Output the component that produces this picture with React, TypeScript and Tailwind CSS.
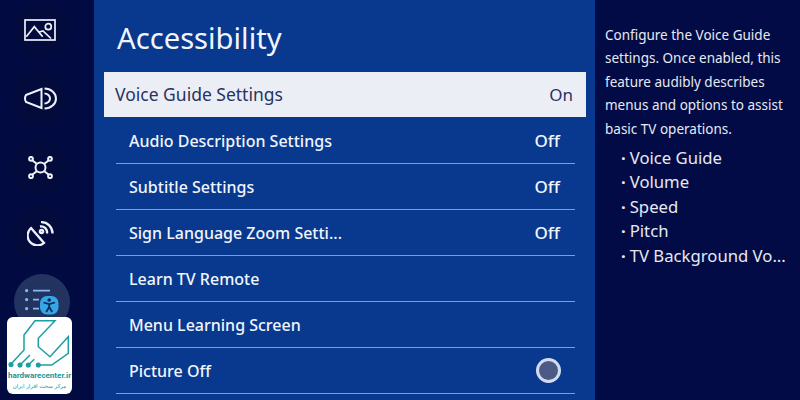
const rows: { label: string; value?: string; radio?: boolean }[] = [
  { label: "Audio Description Settings", value: "Off" },
  { label: "Subtitle Settings", value: "Off" },
  { label: "Sign Language Zoom Setti...", value: "Off" },
  { label: "Learn TV Remote" },
  { label: "Menu Learning Screen" },
  { label: "Picture Off", radio: true },
];

const helpLines = [
  "Configure the Voice Guide",
  "settings. Once enabled, this",
  "feature audibly describes",
  "menus and options to assist",
  "basic TV operations.",
];

const bullets = ["Voice Guide", "Volume", "Speed", "Pitch", "TV Background Vo..."];

function PictureIcon() {
  return (
    <svg width="32" height="22" viewBox="0 0 32 22" fill="none" stroke="#eef1f8" strokeWidth="1.7">
      <rect x="1" y="1" width="30" height="20" />
      <path d="M2.3 17.7 L10.3 7.7 L18.7 17.7 M15 13 L19 12 L27 19.5" />
      <circle cx="24.3" cy="7.7" r="3" />
    </svg>
  );
}

function SoundIcon() {
  return (
    <svg width="33" height="23" viewBox="0 0 33 23" fill="none" stroke="#eef1f8" strokeWidth="2">
      <path d="M2 8 L17.5 2 V21 L2 15 Q0 11.5 2 8 Z" />
      <path d="M20.5 6.5 A5.5 5 0 0 1 20.5 16.5" />
      <path d="M20.5 1.5 A11.5 10 0 0 1 20.5 21.5" />
    </svg>
  );
}

function NetworkIcon() {
  return (
    <svg width="25" height="23" viewBox="0 0 25 23" fill="none" stroke="#eef1f8" strokeWidth="2">
      <circle cx="12.5" cy="11.5" r="5" />
      <circle cx="3" cy="2.8" r="1.9" />
      <circle cx="22" cy="2.8" r="1.9" />
      <circle cx="3" cy="20.2" r="1.9" />
      <circle cx="22" cy="20.2" r="1.9" />
      <path d="M4.5 4.5 L9 8 M20.5 4.5 L16 8 M4.5 18.5 L9 15 M20.5 18.5 L16 15" />
    </svg>
  );
}

function SatelliteIcon() {
  return (
    <svg width="27" height="25" viewBox="0 0 27 25" fill="none" stroke="#eef1f8" strokeWidth="2.3">
      <path d="M4 7 L17 22 A9.6 9.6 0 0 1 4 7 Z" />
      <circle cx="14.5" cy="10.5" r="1.6" />
      <path d="M13 5.5 A6 6 0 0 1 20 12.5" />
      <path d="M14 1.2 A11 11 0 0 1 25.5 12.5" />
    </svg>
  );
}

function AccessIcon() {
  return (
    <svg width="34" height="27" viewBox="0 0 34 27" fill="none">
      <circle cx="1.6" cy="1.6" r="1.6" fill="#8db8ee" />
      <circle cx="1.6" cy="10.6" r="1.6" fill="#8db8ee" />
      <circle cx="1.6" cy="19.6" r="1.6" fill="#8db8ee" />
      <path d="M8 1.6 H25 M8 10.6 H14 M8 19.6 H14" stroke="#8db8ee" strokeWidth="1.6" />
      <rect x="15" y="7" width="18.5" height="18.5" rx="7" fill="#35a6e6" />
      <circle cx="24.2" cy="11" r="1.8" fill="#0f2a58" />
      <path d="M18.5 13.5 L24.2 15 L30 13.5 M24.2 15 V18 M24.2 18 L21.2 23 M24.2 18 L27.2 23" stroke="#0f2a58" strokeWidth="1.8" />
    </svg>
  );
}

function LogoMark() {
  return (
    <svg width="65" height="52" viewBox="0 0 65 52" fill="none" stroke="#1aa0a4" strokeWidth="1.5">
      <path d="M4.7 46.3 L17 33 V18 L28 3.7 H48 L31.3 21.3 V29.7 L43 39.7 L61.3 19.7 V36.3 L44.7 48 H31.3" />
      <path d="M13 48 L23 38 M21.3 48 L27.3 42.3" />
      <circle cx="4" cy="47.5" r="1.8" fill="#1aa0a4" />
      <circle cx="13" cy="48" r="1.8" fill="#1aa0a4" />
      <circle cx="21.3" cy="48" r="1.8" fill="#1aa0a4" />
      <circle cx="31.3" cy="48" r="1.8" fill="#1aa0a4" />
    </svg>
  );
}

export default function App() {
  return (
    <div className="relative flex h-[400px] w-[800px] overflow-hidden bg-[#020b45] font-['Noto_Sans',sans-serif]">
      {/* left icon rail */}
      <div className="flex w-[94px] shrink-0 flex-col items-center bg-[#020a42] pr-[14px] pt-[2px]">
        <div className="flex h-[56px] w-[56px] shrink-0 items-center justify-center rounded-full bg-[#030a3c]"><PictureIcon /></div>
        <div className="mt-[12px] flex h-[56px] w-[56px] shrink-0 items-center justify-center rounded-full bg-[#030a3c]"><SoundIcon /></div>
        <div className="mt-[13px] flex h-[56px] w-[56px] shrink-0 items-center justify-center rounded-full bg-[#030a3c]"><NetworkIcon /></div>
        <div className="mt-[10px] flex h-[56px] w-[56px] shrink-0 items-center justify-center rounded-full bg-[#030a3c]"><SatelliteIcon /></div>
        <div className="ml-[4px] mt-[13px] flex h-[56px] w-[56px] shrink-0 items-center justify-center rounded-full bg-[#22335f]">
          <AccessIcon />
        </div>
      </div>

      {/* main menu */}
      <div className="w-[501px] shrink-0 bg-[#08398e]">
        <h1 className="ml-[23px] h-[72px] pt-[14px] text-[29.2px] leading-[48px] text-[#f2f5fb]">Accessibility</h1>
        <div className="ml-[10px] mr-[9px] flex h-[45px] items-center justify-between bg-[#eceef6] pl-[11px] pr-[13px] text-[17.5px] text-[#27345f]">
          <span>Voice Guide Settings</span>
          <span className="text-[17px]">On</span>
        </div>
        <div className="ml-[22px] mr-[20px] flex flex-col pt-px">
          {rows.map((row) => (
            <div
              key={row.label}
              className="flex h-[46px] items-center justify-between border-b border-[#7f9ccc] pl-[13px] pr-[15px] text-[16px] font-medium text-[#f2f5fb]"
            >
              <span>{row.label}</span>
              {row.value && <span className="text-[17px]">{row.value}</span>}
              {row.radio && (
                <span className="-mr-[1px] h-[25px] w-[25px] rounded-full border-[3px] border-[#d3dcee] bg-[#4d5a85]" />
              )}
            </div>
          ))}
        </div>
      </div>

      {/* help panel */}
      <div className="flex-1 pl-[10px] pt-[24px] text-[#e6e9f2]">
        <div className="text-[13.5px] leading-[23.4px]">
          {helpLines.map((line) => (
            <div key={line} className="whitespace-nowrap">{line}</div>
          ))}
        </div>
        <div className="mt-[5px] pl-[16px] text-[16.7px] leading-[24.4px]">
          {bullets.map((b) => (
            <div key={b} className="whitespace-nowrap">
              <span className="mr-[4px] font-bold">·</span>
              {b}
            </div>
          ))}
        </div>
      </div>

      {/* watermark */}
      <div className="absolute left-[7px] top-[317px] flex h-[77px] w-[65px] flex-col items-center overflow-hidden rounded-[6px] bg-white">
        <LogoMark />
        <div className="mt-[1px] whitespace-nowrap font-['Roboto',sans-serif] text-[8px] leading-[11px] font-bold text-[#14989c]">hardwarecenter.ir</div>
        <div className="whitespace-nowrap font-['DejaVu_Sans',sans-serif] text-[5.5px] leading-[10px] text-[#14989c]" dir="rtl">مرکز سخت افزار ایران</div>
      </div>
    </div>
  );
}
